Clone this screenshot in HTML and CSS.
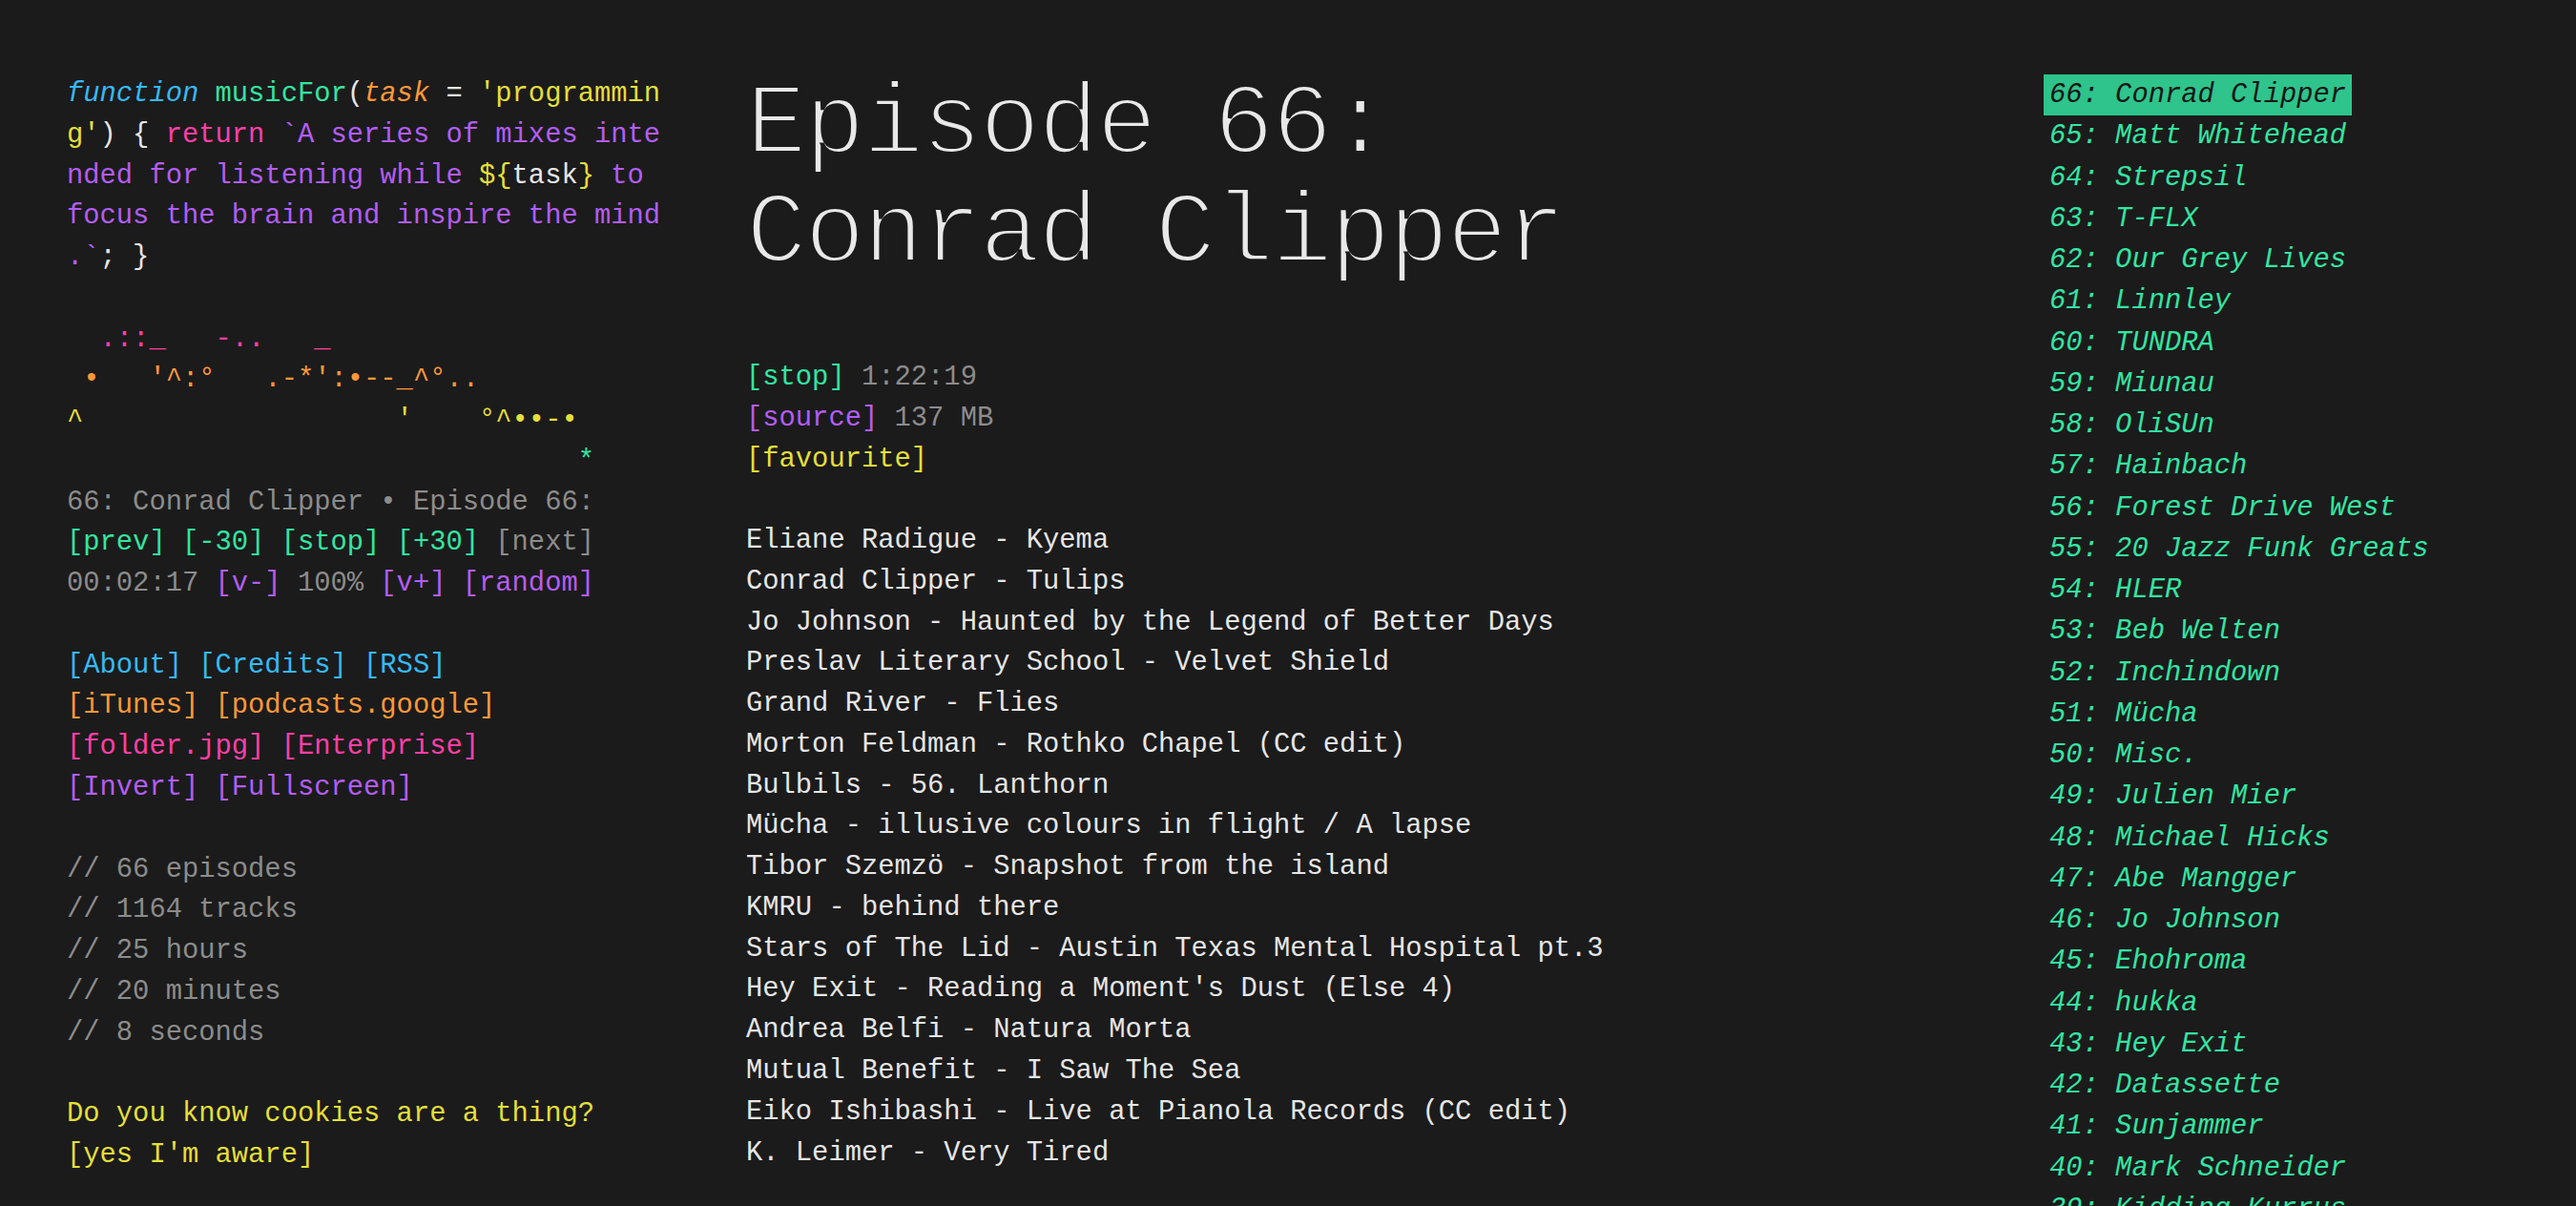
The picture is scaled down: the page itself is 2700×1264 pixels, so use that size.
FILE: index.html
```html
<!DOCTYPE html>
<html lang="en">
<head>
<meta charset="utf-8">
<title>Episode 66: Conrad Clipper</title>
<link rel="stylesheet" href="styles.css">
</head>
<body>
<div class="page">
  <aside class="left">
    <div class="code"><span class="c-blue it">function</span> <span class="c-green">musicFor</span>(<span class="c-orange it">task</span> = <span class="c-yellow">'programming'</span>) { <span class="c-pink">return</span> <span class="c-purple">`A series of mixes intended for listening while <span class="c-yellow">${</span><span class="c-white">task</span><span class="c-yellow">}</span> to focus the brain and inspire the mind.`</span>; }</div>

<pre class="ascii"><span class="c-pink">  .::_   -..   _</span>
<span class="c-orange"> •   '^:°   .-*':•--_^°..</span>
<span class="c-yellow">^                   '    °^••-•</span>
<span class="c-green">                               *</span></pre>

    <div class="player">
      <div class="marquee">66: Conrad Clipper • Episode 66:</div>
      <div><a class="c-green" href="#">[prev]</a> <a class="c-green" href="#">[-30]</a> <a class="c-green" href="#">[stop]</a> <a class="c-green" href="#">[+30]</a> <a class="c-grey" href="#">[next]</a></div>
      <div><span class="c-grey">00:02:17</span> <a class="c-purple" href="#">[v-]</a> <span class="c-grey">100%</span> <a class="c-purple" href="#">[v+]</a> <a class="c-purple" href="#">[random]</a></div>
    </div>

    <nav class="links block">
      <div><a class="c-blue" href="#">[About]</a> <a class="c-blue" href="#">[Credits]</a> <a class="c-blue" href="#">[RSS]</a></div>
      <div><a class="c-orange" href="#">[iTunes]</a> <a class="c-orange" href="#">[podcasts.google]</a></div>
      <div><a class="c-pink" href="#">[folder.jpg]</a> <a class="c-pink" href="#">[Enterprise]</a></div>
      <div><a class="c-purple" href="#">[Invert]</a> <a class="c-purple" href="#">[Fullscreen]</a></div>
    </nav>

    <div class="stats block c-grey">
      <div>// 66 episodes</div>
      <div>// 1164 tracks</div>
      <div>// 25 hours</div>
      <div>// 20 minutes</div>
      <div>// 8 seconds</div>
    </div>

    <div class="cookie block c-yellow">
      <div>Do you know cookies are a thing?</div>
      <div><a class="c-yellow" href="#">[yes I'm aware]</a></div>
    </div>
  </aside>

  <main class="middle">
    <h1 class="title">Episode 66:<br>Conrad Clipper</h1>
    <div class="meta">
      <div><a class="c-green" href="#">[stop]</a> <span class="c-grey">1:22:19</span></div>
      <div><a class="c-purple" href="#">[source]</a> <span class="c-grey">137 MB</span></div>
      <div><a class="c-yellow" href="#">[favourite]</a></div>
    </div>
    <ol class="tracks block">
      <li>Eliane Radigue - Kyema</li>
      <li>Conrad Clipper - Tulips</li>
      <li>Jo Johnson - Haunted by the Legend of Better Days</li>
      <li>Preslav Literary School - Velvet Shield</li>
      <li>Grand River - Flies</li>
      <li>Morton Feldman - Rothko Chapel (CC edit)</li>
      <li>Bulbils - 56. Lanthorn</li>
      <li>Mücha - illusive colours in flight / A lapse</li>
      <li>Tibor Szemzö - Snapshot from the island</li>
      <li>KMRU - behind there</li>
      <li>Stars of The Lid - Austin Texas Mental Hospital pt.3</li>
      <li>Hey Exit - Reading a Moment's Dust (Else 4)</li>
      <li>Andrea Belfi - Natura Morta</li>
      <li>Mutual Benefit - I Saw The Sea</li>
      <li>Eiko Ishibashi - Live at Pianola Records (CC edit)</li>
      <li>K. Leimer - Very Tired</li>
    </ol>
  </main>

  <aside class="right">
    <ul class="episodes">
      <li class="current">66: Conrad Clipper</li>
      <li>65: Matt Whitehead</li>
      <li>64: Strepsil</li>
      <li>63: T-FLX</li>
      <li>62: Our Grey Lives</li>
      <li>61: Linnley</li>
      <li>60: TUNDRA</li>
      <li>59: Miunau</li>
      <li>58: OliSUn</li>
      <li>57: Hainbach</li>
      <li>56: Forest Drive West</li>
      <li>55: 20 Jazz Funk Greats</li>
      <li>54: HLER</li>
      <li>53: Beb Welten</li>
      <li>52: Inchindown</li>
      <li>51: Mücha</li>
      <li>50: Misc.</li>
      <li>49: Julien Mier</li>
      <li>48: Michael Hicks</li>
      <li>47: Abe Mangger</li>
      <li>46: Jo Johnson</li>
      <li>45: Ehohroma</li>
      <li>44: hukka</li>
      <li>43: Hey Exit</li>
      <li>42: Datassette</li>
      <li>41: Sunjammer</li>
      <li>40: Mark Schneider</li>
      <li>39: Kidding Kurrus</li>
    </ul>
  </aside>
</div>
</body>
</html>
```

FILE: styles.css
```css
html, body {
  margin: 0;
  padding: 0;
  background: #1b1b1b;
}

body {
  font-family: "Liberation Mono", "DejaVu Sans Mono", monospace;
  font-size: 28.8px;
  line-height: 42.77px;
  color: #e6e6e6;
}

a {
  text-decoration: none;
}

.page {
  display: grid;
  grid-template-columns: 625px 1fr 488px;
  column-gap: 87px;
  padding: 75px 70px 40px;
  align-items: start;
}

.left,
.right {
  padding-top: 3px;
}

.code {
  word-break: break-all;
  line-break: anywhere;
  overflow-wrap: anywhere;
  color: #e6e6e6;
}

.ascii {
  margin: 42.77px 0 0;
  font: inherit;
  white-space: pre;
}

.block {
  margin-top: 42.77px;
}

.marquee {
  width: 32ch;
  overflow: hidden;
  white-space: nowrap;
  color: #8c8c8c;
}

.it { font-style: italic; }

.c-blue { color: #36b9f4; }
.c-green { color: #33e5a2; }
.c-orange { color: #ff9838; }
.c-yellow { color: #e4df3a; }
.c-pink { color: #ff3fa6; }
.c-purple { color: #b35df4; }
.c-grey { color: #8c8c8c; }
.c-white { color: #e6e6e6; }

/* middle column */
.title {
  margin: 0;
  font-size: 106px;
  letter-spacing: -2.4px;
  line-height: 114px;
  font-weight: normal;
  color: #e8e8e8;
  -webkit-text-stroke: 4px #1b1b1b;
  white-space: nowrap;
}

.meta {
  margin-top: 72px;
}

.tracks {
  list-style: none;
  padding: 0;
  margin-bottom: 0;
  color: #e6e6e6;
}

/* right column */
.episodes {
  list-style: none;
  margin: 0;
  padding: 0;
  font-style: italic;
  line-height: 43.25px;
  color: #33e5a2;
}

.episodes li {
  width: max-content;
  padding: 0 6px;
  white-space: nowrap;
}

.episodes .current {
  background: #2ec48b;
  color: #161616;
}
```
